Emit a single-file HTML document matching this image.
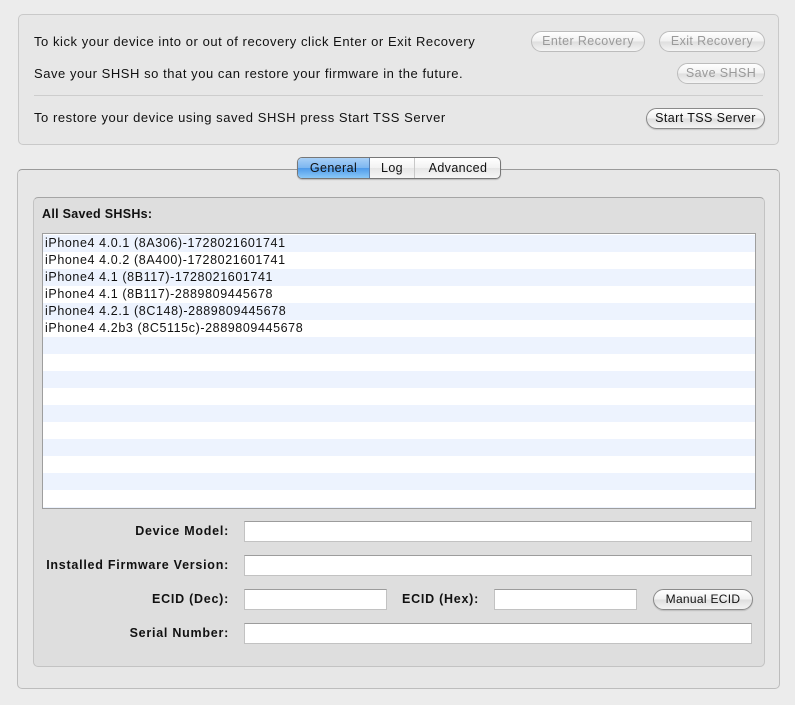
<!DOCTYPE html>
<html><head><style>
*{box-sizing:border-box;margin:0;padding:0}
body{width:795px;height:705px;background:#ececec;font-family:"Liberation Sans",sans-serif;font-size:13px;letter-spacing:0.55px;color:#111;position:relative;overflow:hidden}
.abs{position:absolute}
.box{position:absolute;border:1px solid #c9c9c9;border-radius:5px;background:#e7e7e7}
.btn{position:absolute;height:21px;border:1px solid #8a8a8a;border-radius:11px;background:linear-gradient(#ffffff,#f0f0f0 50%,#dedede 51%,#f4f4f4);text-align:center;line-height:19px;font-size:12.5px;letter-spacing:0.4px;box-shadow:0 1px 1px rgba(0,0,0,.15)}
.dis{color:#9a9a9a;border-color:#bcbcbc;box-shadow:none}
.lbl{position:absolute;right:566px;font-weight:bold;font-size:12.5px;letter-spacing:0.75px;text-align:right;white-space:nowrap}
.fld{position:absolute;height:21px;background:#fff;border:1px solid #c2c2c2;border-top-color:#9c9c9c}
.row{height:17px;line-height:17px;padding-left:2px;font-size:12.5px;letter-spacing:0.6px;white-space:nowrap}
.row:nth-child(odd){background:#edf3fe}
.row:nth-child(even){background:#fff}
</style></head><body>
<div class="box" style="left:18px;top:14px;width:761px;height:131px"></div>
<div class="abs" style="left:34px;top:34px">To kick your device into or out of recovery click Enter or Exit Recovery</div>
<div class="abs" style="left:34px;top:66px">Save your SHSH so that you can restore your firmware in the future.</div>
<div class="abs" style="left:34px;top:95px;width:729px;height:1px;background:#cdcdcd"></div>
<div class="abs" style="left:34px;top:110px">To restore your device using saved SHSH press Start TSS Server</div>
<div class="btn dis" style="left:531px;top:31px;width:114px">Enter Recovery</div>
<div class="btn dis" style="left:659px;top:31px;width:106px">Exit Recovery</div>
<div class="btn dis" style="left:677px;top:63px;width:88px">Save SHSH</div>
<div class="btn" style="left:646px;top:108px;width:119px">Start TSS Server</div>

<div class="box" style="left:17px;top:169px;width:763px;height:520px;border-color:#bdbdbd;border-top-color:#9a9a9a"></div>
<div class="abs" style="left:297px;top:157px;width:204px;height:22px;border:1px solid #777;border-radius:5px;background:linear-gradient(#fff,#f2f2f2 50%,#e6e6e6 51%,#f6f6f6);overflow:hidden;font-size:12.5px;letter-spacing:0.4px;line-height:20px;box-shadow:0 1px 1px rgba(0,0,0,.2)">
<div class="abs" style="left:0;top:0;width:72px;height:20px;background:linear-gradient(#a9d0f7,#7cb6f0 50%,#4f9bea 51%,#8ac8f7);text-align:center;border-right:1px solid #5a7fae">General</div>
<div class="abs" style="left:72px;top:0;width:45px;height:20px;text-align:center;border-right:1px solid #c8c8c8">Log</div>
<div class="abs" style="left:117px;top:0;width:86px;height:20px;text-align:center">Advanced</div>
</div>
<div class="box" style="left:33px;top:197px;width:732px;height:470px;background:#dedede;border-color:#c3c3c3;border-top-color:#a5a5a5"></div>
<div class="abs" style="left:42px;top:207px;font-weight:bold;font-size:12.5px;letter-spacing:0.3px">All Saved SHSHs:</div>
<div class="abs" style="left:42px;top:233px;width:714px;height:276px;border:1px solid #9e9e9e;background:#fff;padding-top:1px;overflow:hidden">
<div class="row">iPhone4 4.0.1 (8A306)-1728021601741</div>
<div class="row">iPhone4 4.0.2 (8A400)-1728021601741</div>
<div class="row">iPhone4 4.1 (8B117)-1728021601741</div>
<div class="row">iPhone4 4.1 (8B117)-2889809445678</div>
<div class="row">iPhone4 4.2.1 (8C148)-2889809445678</div>
<div class="row">iPhone4 4.2b3 (8C5115c)-2889809445678</div>
<div class="row"></div><div class="row"></div><div class="row"></div><div class="row"></div><div class="row"></div><div class="row"></div><div class="row"></div><div class="row"></div><div class="row"></div><div class="row"></div><div class="row"></div>
</div>
<div class="lbl" style="top:524px">Device Model:</div>
<div class="fld" style="left:244px;top:521px;width:508px"></div>
<div class="lbl" style="top:558px">Installed Firmware Version:</div>
<div class="fld" style="left:244px;top:555px;width:508px"></div>
<div class="lbl" style="top:592px">ECID (Dec):</div>
<div class="fld" style="left:244px;top:589px;width:143px"></div>
<div class="lbl" style="top:592px;right:316px">ECID (Hex):</div>
<div class="fld" style="left:494px;top:589px;width:143px"></div>
<div class="btn" style="left:653px;top:589px;width:100px;font-size:12px;letter-spacing:0.3px">Manual ECID</div>
<div class="lbl" style="top:626px">Serial Number:</div>
<div class="fld" style="left:244px;top:623px;width:508px"></div>
</body></html>
